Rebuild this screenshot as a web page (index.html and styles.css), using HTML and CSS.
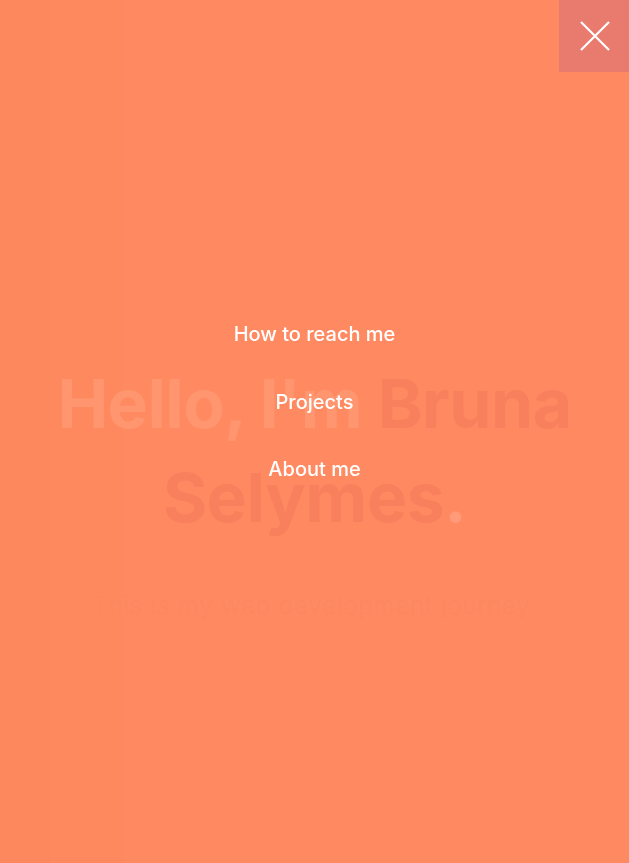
FILE: index.html
```html
<!DOCTYPE html>
<html lang="en">
<head>
<meta charset="utf-8">
<title>Bruna Selymes</title>
<link rel="stylesheet" href="styles.css">
</head>
<body>
  <main class="hero">
    <h1 class="title"><span class="light">Hello, I'm</span> <span class="dark">Bruna Selymes</span><span class="dot">.</span></h1>
    <p class="subtitle">This is my web development journey.</p>
  </main>
  <nav class="menu-overlay">
    <ul class="menu">
      <li><a href="#contact">How to reach me</a></li>
      <li><a href="#projects">Projects</a></li>
      <li><a href="#about">About me</a></li>
    </ul>
  </nav>
  <button class="close" aria-label="Close menu">
    <svg width="30" height="30" viewBox="0 0 30 30"><path d="M1 1 L29 29 M29 1 L1 29" stroke="#fff" stroke-width="2.2" fill="none"/></svg>
  </button>
</body>
</html>
```
FILE: styles.css
```css
* { box-sizing: border-box; }
html, body { height: 100%; }
body {
  margin: 0;
  overflow: hidden;
  font-family: "Inter", "Lato", "DejaVu Sans", sans-serif;
  background: linear-gradient(to right, #fe885e 0, #fe885e 50px, #ff895f 50px, #ff895f 123px, #ff8a61 123px, #ff8a61 100%);
}
.hero {
  padding-top: 356px;
  text-align: center;
}
.title {
  margin: 0 auto;
  max-width: 540px;
  font-size: 68px;
  line-height: 94px;
  font-weight: 700;
  letter-spacing: -0.6px;
}
.light { color: #ff966f; }
.dark { color: #f8805c; }
.dot { color: #ff9b78; }
.subtitle {
  margin: 47px 0 0;
  font-size: 24px;
  line-height: 30px;
  font-weight: 300;
  letter-spacing: 0.85px;
  color: #fb8862;
}
.menu-overlay {
  position: fixed;
  inset: 0;
  display: flex;
  justify-content: center;
  padding-top: 320px;
}
.menu {
  list-style: none;
  margin: 0;
  padding: 0;
  display: flex;
  flex-direction: column;
  align-items: center;
  gap: 38.5px;
}
.menu li { line-height: 28px; }
.menu a {
  color: #fff;
  text-decoration: none;
  font-size: 20px;
  font-weight: 500;
}
.close {
  position: fixed;
  top: 0;
  right: 0;
  width: 70px;
  height: 72px;
  border: 0;
  padding: 0;
  background: #e87a6e;
  display: flex;
  align-items: center;
  justify-content: center;
  cursor: pointer;
}
.close svg { display: block; margin-left: 2px; }
```
